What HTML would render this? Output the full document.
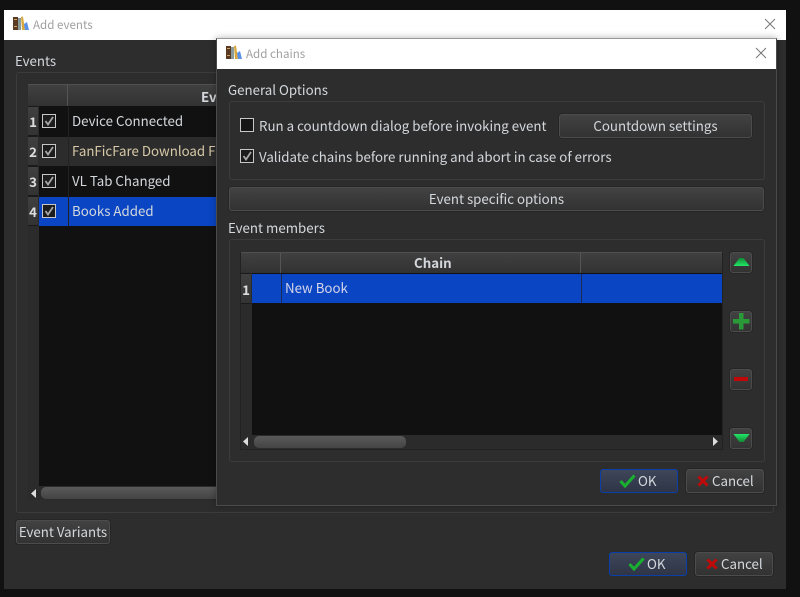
<!DOCTYPE html>
<html><head><meta charset="utf-8"><style>
html,body{margin:0;padding:0;width:800px;height:597px;overflow:hidden;background:#111;}
*{box-sizing:border-box}
div,svg{position:absolute}
body{font-family:"Noto Sans CJK JP","DejaVu Sans",sans-serif;font-size:13.3px;color:#d4d8dc}
.t{white-space:nowrap;line-height:16px;height:16px}
.ttl{color:#a0a0a0;font-size:11.6px}
.grp{border:1px solid #3c3c3c;border-radius:3px}
.btn{background:linear-gradient(#424242,#323232);border:1px solid #4c4c4c;box-shadow:0 0 0 1px #262626;border-radius:3px;text-align:center;line-height:22px;white-space:nowrap}
.ok{background:linear-gradient(#3e4659,#2f3547);border:1px solid #0b3fa8;box-shadow:none}
.hd{background:linear-gradient(#404040,#323232);border-top:1px solid #505050}
.rh{background:linear-gradient(#404040,#333);border-bottom:1px solid #1a1a1a;border-top:1px solid #1a1a1a;color:#ddd;font-weight:bold;text-align:center;line-height:29px;width:10px;height:30px}
.cb{width:14px;height:14px;border:1px solid #c8c8c8;background:#1c1c1c}
.sb{background:#2b2b2b}
.th{background:linear-gradient(#5a5a5a,#444);border-radius:5px}
.sq{width:22px;height:21px;background:linear-gradient(#424242,#333);border:1px solid #4c4c4c;box-shadow:0 0 0 1px #262626;border-radius:3px}
.cb path{stroke:#a8a8a8;stroke-width:1.800}
</style></head><body>

<!-- outer dialog -->
<div style="left:4px;top:10px;width:782px;height:579px;background:#2d2d2d"></div>
<div style="left:4px;top:10px;width:782px;height:30px;background:#fff"></div>
<svg style="left:12px;top:15px" width="17" height="17" viewBox="0 0 17 17"><rect x="1" y="2" width="5" height="13" fill="#5a3a20"/><rect x="2" y="4" width="3" height="1" fill="#c9a36a"/><rect x="2" y="11" width="3" height="1" fill="#c9a36a"/><rect x="6" y="3" width="3" height="12" fill="#8a9a9a"/><path d="M9 2l2-.5 2 13.500h-3z" fill="#d9a83c"/><path d="M12 9l3-2 2 8h-4z" fill="#5a90e8"/></svg>
<div class="t ttl" style="left:33px;top:17px">Add events</div>
<svg style="left:764px;top:18px" width="12" height="12"><path d="M1 1L11 11M11 1L1 11" stroke="#777" stroke-width="1" fill="none"/></svg>

<div class="t" style="left:15px;top:53px">Events</div>
<div class="grp" style="left:16px;top:72px;width:758px;height:441px"></div>

<!-- events table -->
<div style="left:28px;top:84px;width:200px;height:416px;background:#2b2b2b"></div>
<div class="hd" style="left:28px;top:84px;width:200px;height:22px"></div>
<div style="left:67px;top:85px;width:1px;height:21px;background:#555"></div>
<div class="t" style="left:201px;top:89px;font-weight:bold">Event</div>
<div style="left:39px;top:106px;width:190px;height:380px;background:#111"></div>

<div style="left:39px;top:107px;width:190px;height:29px;background:#111"></div>
<div style="left:39px;top:137px;width:190px;height:29px;background:#2c2c2c"></div>
<div style="left:39px;top:167px;width:190px;height:29px;background:#111"></div>
<div style="left:39px;top:197px;width:190px;height:29px;background:#0a45c4"></div>
<div style="left:68px;top:107px;width:1px;height:119px;background:#222"></div>

<div class="rh" style="left:28px;top:106px">1</div>
<div class="rh" style="left:28px;top:136px">2</div>
<div class="rh" style="left:28px;top:166px">3</div>
<div class="rh" style="left:28px;top:196px">4</div>

<div class="cb" style="left:42px;top:114px"><svg style="left:1px;top:1px" width="10" height="10"><path d="M1.500 5L4 8.500L9 1" fill="none"/></svg></div>
<div class="cb" style="left:42px;top:144px"><svg style="left:1px;top:1px" width="10" height="10"><path d="M1.500 5L4 8.500L9 1" fill="none"/></svg></div>
<div class="cb" style="left:42px;top:174px"><svg style="left:1px;top:1px" width="10" height="10"><path d="M1.500 5L4 8.500L9 1" fill="none"/></svg></div>
<div class="cb" style="left:42px;top:204px"><svg style="left:1px;top:1px" width="10" height="10"><path d="M1.500 5L4 8.500L9 1" fill="none"/></svg></div>

<div class="t" style="left:72px;top:113px">Device Connected</div>
<div class="t" style="left:72px;top:143px;width:146px;overflow:hidden;color:#d8c9a8">FanFicFare Download Finished</div>
<div class="t" style="left:72px;top:173px">VL Tab Changed</div>
<div class="t" style="left:72px;top:203px">Books Added</div>

<div class="sb" style="left:28px;top:486px;width:190px;height:14px"></div>
<svg style="left:31px;top:489px" width="6" height="9"><path d="M5 0V9L0 4.500Z" fill="#ddd"/></svg>
<div class="th" style="left:41px;top:487px;width:190px;height:12px"></div>

<div class="btn" style="left:16px;top:520px;width:94px;height:24px">Event Variants</div>

<div class="btn ok" style="left:609px;top:552px;width:78px;height:24px"></div>
<svg style="left:628px;top:557px" width="17" height="14"><path d="M1.500 7L6 12L15.500 1.500" stroke="#19b030" stroke-width="3" fill="none"/></svg>
<div class="t" style="left:647px;top:556px">OK</div>
<div class="btn" style="left:695px;top:552px;width:78px;height:24px"></div>
<svg style="left:706px;top:558px" width="12" height="12"><path d="M1.500 1.500L10.500 10.500M10.500 1.500L1.500 10.500" stroke="#c00a0a" stroke-width="3" fill="none"/></svg>
<div class="t" style="left:721px;top:556px">Cancel</div>

<!-- inner dialog -->
<div style="left:216px;top:38px;width:561px;height:468px;background:#2d2d2d;border:1px solid #4a4a4a;border-top-color:#999;box-shadow:0 0 7px rgba(0,0,0,.3)"></div>
<div style="left:217px;top:39px;width:559px;height:30px;background:#fff"></div>
<svg style="left:225px;top:44px" width="17" height="17" viewBox="0 0 17 17"><rect x="1" y="2" width="5" height="13" fill="#5a3a20"/><rect x="2" y="4" width="3" height="1" fill="#c9a36a"/><rect x="2" y="11" width="3" height="1" fill="#c9a36a"/><rect x="6" y="3" width="3" height="12" fill="#8a9a9a"/><path d="M9 2l2-.5 2 13.500h-3z" fill="#d9a83c"/><path d="M12 9l3-2 2 8h-4z" fill="#5a90e8"/></svg>
<div class="t ttl" style="left:246px;top:46px">Add chains</div>
<svg style="left:755px;top:47px" width="12" height="12"><path d="M1 1L11 11M11 1L1 11" stroke="#777" stroke-width="1" fill="none"/></svg>

<div class="t" style="left:228px;top:82px">General Options</div>
<div class="grp" style="left:229px;top:101px;width:536px;height:79px"></div>
<div class="cb" style="left:240px;top:118px;background:#161616"></div>
<div class="t" style="left:259px;top:118px">Run a countdown dialog before invoking event</div>
<div class="cb" style="left:240px;top:149px"><svg style="left:1px;top:1px" width="10" height="10"><path d="M1.500 5L4 8.500L9 1" fill="none"/></svg></div>
<div class="t" style="left:259px;top:149px">Validate chains before running and abort in case of errors</div>
<div class="btn" style="left:559px;top:114px;width:193px;height:24px">Countdown settings</div>
<div class="btn" style="left:229px;top:187px;width:535px;height:24px">Event specific options</div>

<div class="t" style="left:228px;top:220px">Event members</div>
<div class="grp" style="left:229px;top:239px;width:536px;height:223px"></div>

<!-- chain table -->
<div style="left:240px;top:252px;width:483px;height:198px;background:#2b2b2b;border:1px solid #222"></div>
<div class="hd" style="left:241px;top:252px;width:481px;height:21px"></div>
<div style="left:280px;top:253px;width:1px;height:20px;background:#555"></div>
<div style="left:580px;top:253px;width:1px;height:20px;background:#555"></div>
<div class="t" style="left:414px;top:255px;font-weight:bold">Chain</div>
<div style="left:252px;top:273px;width:470px;height:162px;background:#111"></div>
<div style="left:252px;top:274px;width:470px;height:29px;background:#0a45c4"></div>
<div style="left:281px;top:274px;width:1px;height:29px;background:#1a2c55"></div>
<div style="left:581px;top:274px;width:1px;height:29px;background:#1a2c55"></div>
<div class="rh" style="left:241px;top:273px;height:31px;line-height:31px">1</div>
<div class="t" style="left:285px;top:280px;color:#d6d6ea">New Book</div>
<svg style="left:243px;top:437px" width="6" height="9"><path d="M5 0V9L0 4.500Z" fill="#ddd"/></svg>
<div class="th" style="left:254px;top:436px;width:152px;height:12px"></div>
<svg style="left:713px;top:437px" width="6" height="9"><path d="M0 0V9L5 4.500Z" fill="#ddd"/></svg>

<!-- side buttons -->
<div class="sq" style="left:730px;top:252px"></div>
<svg style="left:733px;top:257px" width="17" height="10"><defs><linearGradient id="g1" x1="0" y1="0" x2="0" y2="1"><stop offset="0" stop-color="#0f8a34"/><stop offset="1" stop-color="#22e868"/></linearGradient></defs><path d="M6.500 1h4L16.500 9H.5Z" fill="url(#g1)"/></svg>
<div class="sq" style="left:730px;top:311px"></div>
<svg style="left:733px;top:313px" width="17" height="17"><path d="M6 0h4.500v6h6v4.500h-6v6H6v-6H0V6h6z" fill="#2a9a38"/></svg>
<div class="sq" style="left:730px;top:369px"></div>
<div style="left:734px;top:377px;width:14px;height:4px;background:#c00808"></div>
<div class="sq" style="left:730px;top:428px"></div>
<svg style="left:733px;top:433px" width="17" height="10"><defs><linearGradient id="g2" x1="0" y1="0" x2="0" y2="1"><stop offset="0" stop-color="#22e868"/><stop offset="1" stop-color="#0f8a34"/></linearGradient></defs><path d="M.5 1H16.500L10.500 9h-4Z" fill="url(#g2)"/></svg>

<div class="btn ok" style="left:600px;top:469px;width:78px;height:24px"></div>
<svg style="left:619px;top:474px" width="17" height="14"><path d="M1.500 7L6 12L15.500 1.500" stroke="#19b030" stroke-width="3" fill="none"/></svg>
<div class="t" style="left:638px;top:473px">OK</div>
<div class="btn" style="left:686px;top:469px;width:78px;height:24px"></div>
<svg style="left:697px;top:475px" width="12" height="12"><path d="M1.500 1.500L10.500 10.500M10.500 1.500L1.500 10.500" stroke="#c00a0a" stroke-width="3" fill="none"/></svg>
<div class="t" style="left:712px;top:473px">Cancel</div>

</body></html>
